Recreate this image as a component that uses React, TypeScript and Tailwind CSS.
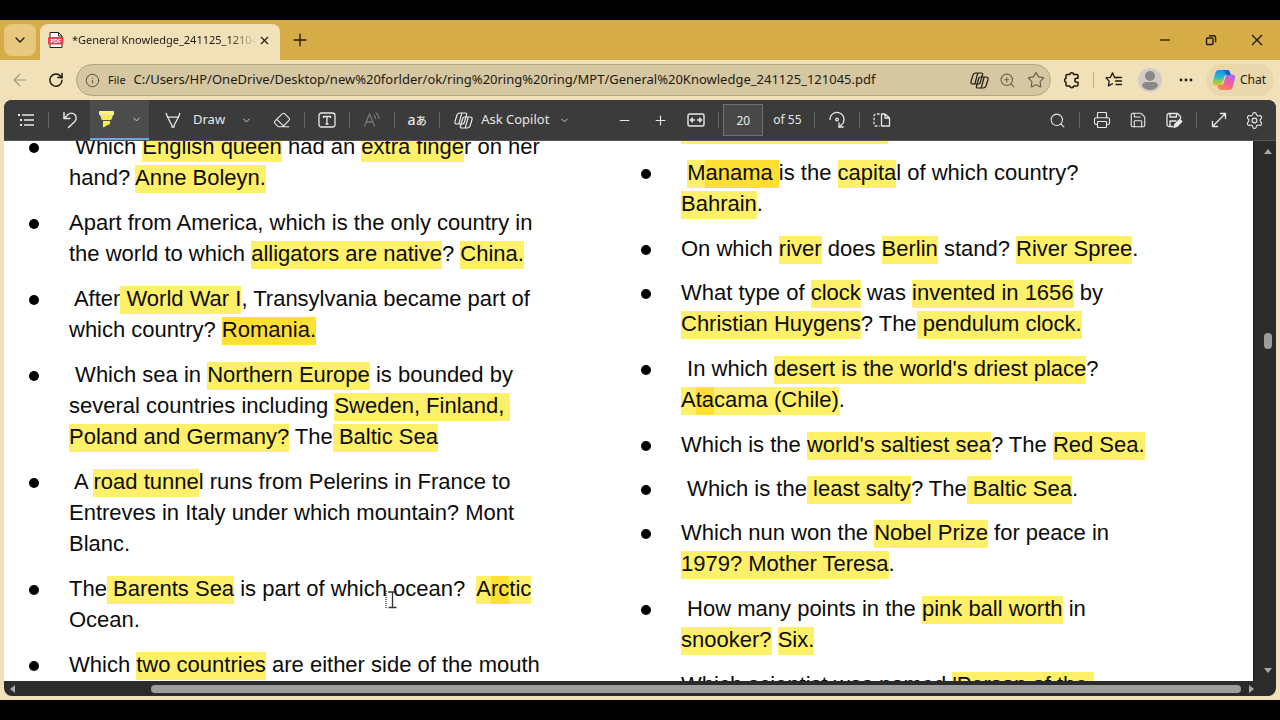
// PDF viewer inside a desktop browser window
import { useState } from 'react';
import type { ReactNode } from 'react';
import { ChevronDown, Eraser, Plus, Minus, Printer, Save, Search, Settings, Star, X, ZoomIn, ArrowLeft, Info } from 'lucide-react';

// one entry per bullet, one string per line; [..] = highlighted, {..} = highlighted twice
const LEFT: string[][] = [
  [' Which [English queen] had an [extra finge]r on her', 'hand? [Anne Boleyn.]'],
  ['Apart from America, which is the only country in', 'the world to which [alligators are native]? [China.]'],
  [' After[ World War I], Transylvania became part of', 'which country? {Romania.}'],
  [' Which sea in [Northern Europe] is bounded by', 'several countries including [Sweden, Finland, ]', '[Poland and Germany?] The[ Baltic Sea]'],
  [' A [road tunne]l runs from Pelerins in France to', 'Entreves in Italy under which mountain? Mont', 'Blanc.'],
  ['The[ Barents Sea] is part of which ocean?  [A]{rc}[tic]', 'Ocean.'],
  ['Which [two countries] are either side of the mouth'],
];

const RIGHT: string[][] = [
  ['[Mary Queen of Scots]'],
  [' [M]{anama }is the [capita]l of which country?', '[Bahrain].'],
  ['On which [river] does [Berlin] stand? [River Spree].'],
  ['What type of [clock] was [invented in 1656] by', '[Christian Huygens]? The[ pendulum clock.]'],
  [" In which [desert is the world's driest place]?", '[A]{ta}[cama (Chile)].'],
  ["Which is the [world's saltiest sea]? The [Red Sea.]"],
  [' Which is the[ least salty]? The[ Baltic Sea].'],
  ['Which nun won the [Nobel Prize] for peace in', '[1979? Mother Teresa].'],
  [' How many points in the [pink ball worth] in', '[snooker?] [Six.]'],
  ["Which scientist was named ['Person of the ]"],
];

export default function App() {
  return (
    <div className="flex h-screen flex-col overflow-hidden bg-black py-5 font-['Noto_Sans','Noto_Sans_CJK_JP',sans-serif] text-[#1f1a10]">
      <TabStrip />
      <AddressBar />
      <main className="flex min-h-0 flex-1 flex-col bg-[#f1e1b9] px-1 pb-1">
        <div className="flex min-h-0 flex-1 flex-col overflow-hidden rounded-lg bg-[#2b2b2b]">
          <PdfToolbar />
          <div className="flex min-h-0 flex-1">
            <Page />
            <VerticalScroll />
          </div>
          <HorizontalScroll />
        </div>
      </main>
    </div>
  );
}

/* ---------- browser chrome ---------- */

function TabStrip() {
  return (
    <header className="flex h-10 shrink-0 items-center bg-[#d6ac46]">
      <button className="ml-1 flex size-8 items-center justify-center rounded-lg bg-[#e6c97e]" aria-label="Tab actions">
        <ChevronDown size={16} strokeWidth={2} />
      </button>
      <div className="ml-1 flex h-9 w-60 items-center self-end rounded-t-lg bg-[#f1e1b9] px-2 pb-1">
        <PdfIcon />
        <span className="ml-2 min-w-0 flex-1 overflow-hidden text-[11px] whitespace-nowrap [mask-image:linear-gradient(to_right,black_85%,transparent)]">
          *General Knowledge_241125_121045.pdf
        </span>
        <button className="flex size-4 items-center justify-center" aria-label="Close tab">
          <X size={13} strokeWidth={2} />
        </button>
      </div>
      <button className="flex h-10 w-10 items-center justify-center" aria-label="New tab">
        <Plus size={20} strokeWidth={1.6} />
      </button>
      <div className="ml-auto flex">
        <button className="flex h-10 w-[46px] items-center justify-center" aria-label="Minimize">
          <svg width="12" height="12" viewBox="0 0 12 12" stroke="currentColor" strokeWidth="1.3"><path d="M1 6h10" /></svg>
        </button>
        <button className="flex h-10 w-[46px] items-center justify-center" aria-label="Restore">
          <svg width="12" height="12" viewBox="0 0 12 12" fill="none" stroke="currentColor" strokeWidth="1.4">
            <rect x="1.5" y="4" width="6.5" height="6.5" rx="1.2" />
            <path d="M4 1.7h4.6a2 2 0 0 1 2 2v4.6" />
          </svg>
        </button>
        <button className="flex h-10 w-[46px] items-center justify-center" aria-label="Close">
          <svg width="12" height="12" viewBox="0 0 12 12" stroke="currentColor" strokeWidth="1.4"><path d="M1 1l10 10M11 1L1 11" /></svg>
        </button>
      </div>
    </header>
  );
}

function AddressBar() {
  const [url, setUrl] = useState('C:/Users/HP/OneDrive/Desktop/new%20forlder/ok/ring%20ring%20ring/MPT/General%20Knowledge_241125_121045.pdf');
  return (
    <nav className="flex h-10 shrink-0 items-center bg-[#f1e1b9] pr-1.5">
      <button className="flex h-8 w-10 items-center justify-center text-[#a3967a]" aria-label="Back">
        <ArrowLeft size={20} strokeWidth={1.4} />
      </button>
      <button className="mr-1 flex size-8 items-center justify-center" aria-label="Refresh">
        <svg width="16" height="16" viewBox="0 0 16 16" fill="none" stroke="currentColor" strokeWidth="1.5" strokeLinecap="round" strokeLinejoin="round">
          <path d="M14 8.3A6.1 6.1 0 1 1 12.6 4.2L14 5.6" />
          <path d="M14 1.5v4.1H9.9" />
        </svg>
      </button>
      <div className="flex h-8 min-w-0 flex-1 items-center rounded-full border border-[#b3a681] bg-[#d5c7a2] pl-2">
        <Info size={15} strokeWidth={1.6} className="shrink-0 text-[#5c5340]" />
        <label htmlFor="url" className="ml-2 text-[11px]">File</label>
        <input
          id="url"
          className="ml-2 min-w-0 flex-1 bg-transparent text-[13px] outline-none"
          value={url}
          onChange={(e) => setUrl(e.target.value)}
        />
        <button className="flex w-7 justify-center" aria-label="Copilot"><CopilotOutline /></button>
        <button className="flex w-7 justify-center text-[#6b6048]" aria-label="Zoom"><ZoomIn size={17} strokeWidth={1.6} /></button>
        <button className="flex w-7 justify-center text-[#6b6048]" aria-label="Favorite"><Star size={18} strokeWidth={1.6} /></button>
      </div>
      <button className="flex w-[42px] justify-center" aria-label="Extensions">
        <svg width="17" height="18" viewBox="0 0 17 18" fill="none" stroke="currentColor" strokeWidth="1.5" strokeLinejoin="round">
          <path d="M4 3.5h2.7a2.1 2.1 0 0 1 4.1 0H14a1 1 0 0 1 1 1v2.7h-1.2a2 2 0 0 0 0 4H15V14a1 1 0 0 1-1 1h-3.2a2.1 2.1 0 0 1-4.1 0H4a1 1 0 0 1-1-1v-2.8a2.1 2.1 0 0 1 0-4V4.5a1 1 0 0 1 1-1z" />
        </svg>
      </button>
      <span className="h-4 w-px bg-[#b9ab86]" />
      <button className="flex w-10 justify-center" aria-label="Favorites">
        <svg width="18" height="18" viewBox="0 0 18 18" fill="none" stroke="currentColor" strokeWidth="1.3" strokeLinejoin="round" strokeLinecap="round">
          <path d="M9.5 6.5L7.5 1.8 5.5 6.3 1 6.9l3.2 3.2-.8 4.8 4.1-2.2M9.5 6.5H12" />
          <path d="M11 6.5h5.5M10.5 10h6M11 13.5h5.5" />
        </svg>
      </button>
      <button className="mx-1 flex size-6 items-center justify-center overflow-hidden rounded-full bg-[#d3cbc5]" aria-label="Profile">
        <svg width="20" height="20" viewBox="0 0 20 20" fill="#8b8887">
          <circle cx="10" cy="6" r="5" />
          <path d="M2 16c0-2.5 2-4 4-4h8c2 0 4 1.5 4 4-1.5 2.500-5 4-8 4s-6.500-1.500-8-4z" />
        </svg>
      </button>
      <button className="flex w-10 justify-center" aria-label="More">
        <svg width="14" height="4" viewBox="0 0 14 4" fill="currentColor"><circle cx="2" cy="2" r="1.4" /><circle cx="7" cy="2" r="1.4" /><circle cx="12" cy="2" r="1.4" /></svg>
      </button>
      <button className="flex h-8 items-center gap-1 rounded-full bg-[#e9d8ad] pr-2 pl-1.5 text-xs">
        <CopilotColor />
        Chat
      </button>
    </nav>
  );
}

/* ---------- viewer toolbar ---------- */

function PdfToolbar() {
  const [page, setPage] = useState('20');
  return (
    <div className="flex h-[41px] shrink-0 items-center border-b border-[#555555] bg-[#3b3b3b] text-[#e8e8e8]">
      <Tool label="Contents">
        <svg width="18" height="14" viewBox="0 0 18 14" fill="none" stroke="currentColor" strokeWidth="1.3">
          <path d="M5 2h12M7 7h10M7 12h10" /><path d="M1 2h2M3 7h2M3 12h2" strokeWidth="1.8" />
        </svg>
      </Tool>
      <Sep />
      <button className="flex h-10 w-[41px] items-center justify-center" aria-label="Undo">
        <svg width="16" height="18" viewBox="0 0 16 18" fill="none" stroke="currentColor" strokeWidth="1.4" strokeLinecap="round" strokeLinejoin="round">
          <path d="M2 1.5v6h6" /><path d="M2.3 7.2L6 3.6a4.800 4.800 0 0 1 6.800 6.800L6.500 16.500" />
        </svg>
      </button>
      <button className="flex h-10 w-[59px] items-center justify-center gap-4 border-b-2 border-[#6aa5dc] bg-[#4c4c4c]" aria-label="Highlight">
        <svg width="17" height="18" viewBox="0 0 17 18">
          <path d="M1.5 1.5h14v3h-14z" fill="#fff36b" stroke="#f5ecc0" />
          <path d="M2.500 5h12l-1.500 4.500h-9z" fill="#f7e84e" stroke="#e8dfb0" />
          <path d="M5 11h7v3l-7 3.500z" fill="#fff04a" />
        </svg>
        <ChevronDown size={11} strokeWidth={1.8} />
      </button>
      <button className="flex h-10 items-center pr-2 pl-4 text-[13px]">
        <svg width="16" height="16" viewBox="0 0 16 16" fill="none" stroke="currentColor" strokeWidth="1.3" strokeLinejoin="round">
          <path d="M1 1l1.500 4L7 13.500V15h2v-1.500L13.500 5 15 1M2.500 5.200h11" />
        </svg>
        <span className="ml-3">Draw</span>
        <ChevronDown size={11} strokeWidth={1.8} className="ml-4" />
      </button>
      <Tool label="Erase"><Eraser size={18} strokeWidth={1.5} /></Tool>
      <Sep />
      <Tool label="Add text">
        <svg width="18" height="16" viewBox="0 0 18 16" fill="none" stroke="currentColor" strokeWidth="1.3">
          <rect x="1" y="1" width="16" height="14" rx="2.5" /><path d="M5.500 6V4.500h7V6M9 4.500v7.500M7.500 12h3" />
        </svg>
      </Tool>
      <Sep />
      <Tool label="Read aloud" dim>
        <svg width="18" height="18" viewBox="0 0 18 18" fill="none" stroke="currentColor" strokeWidth="1.3" strokeLinecap="round">
          <path d="M1.500 15L6.500 3l5 12M3.300 11h6.400M11 4.500c1 .8 1.400 1.800 1.400 3M13 2c2 1.500 3 3.300 3 5.500" />
        </svg>
      </Tool>
      <Sep />
      <Tool label="Translate">
        <span className="text-sm leading-none font-medium">a<span className="text-[11px]">あ</span></span>
      </Tool>
      <Sep />
      <button className="flex h-10 items-center pl-3.5 text-[13px]">
        <CopilotOutline />
        <span className="ml-2 whitespace-nowrap">Ask Copilot</span>
        <ChevronDown size={11} strokeWidth={1.8} className="ml-2.5" />
      </button>
      <div className="ml-9 flex items-center">
        <Tool label="Zoom out" narrow><Minus size={15} strokeWidth={1.8} /></Tool>
        <Tool label="Zoom in" narrow><Plus size={15} strokeWidth={1.8} /></Tool>
        <Tool label="Fit to width" narrow>
          <svg width="18" height="14" viewBox="0 0 18 14" fill="none" stroke="currentColor" strokeWidth="1.4">
            <rect x="1" y="1" width="16" height="12" rx="1.5" /><path d="M3.500 7H8M10 7h4.500M5.800 4.800L3.500 7l2.300 2.200M12.200 4.800L14.500 7l-2.300 2.200" />
          </svg>
        </Tool>
        <span className="mx-1"><Sep /></span>
        <input
          aria-label="Page number"
          className="h-8 w-10 border border-[#707070] bg-[#484848] text-center text-xs"
          value={page}
          onChange={(e) => setPage(e.target.value)}
        />
        <span className="mr-3 ml-2.5 text-xs whitespace-nowrap">of 55</span>
        <Sep />
        <Tool label="Rotate">
          <svg width="18" height="18" viewBox="0 0 18 18" fill="none" stroke="currentColor" strokeWidth="1.3" strokeLinecap="round" strokeLinejoin="round">
            <path d="M2 8.500a7 7 0 1 1 11.200 5.600L11 16" /><path d="M11 12v4h4.200" /><circle cx="9" cy="8.5" r="1.3" />
          </svg>
        </Tool>
        <Sep />
        <Tool label="Page view">
          <svg width="18" height="14" viewBox="0 0 18 14" fill="none" stroke="currentColor" strokeWidth="1.3" strokeLinejoin="round">
            <path d="M8.500 1H12l4.500 4v8h-8zM12 1v4h4.500" /><path d="M6.500 1H3a2 2 0 0 0-2 2v8a2 2 0 0 0 2 2h3.500" strokeDasharray="2.5 1.5" />
          </svg>
        </Tool>
      </div>
      <div className="ml-auto flex items-center pr-3">
        <Tool label="Find"><Search size={17} strokeWidth={1.5} /></Tool>
        <Sep />
        <span className="w-1" />
        <Tool label="Print" narrow><Printer size={18} strokeWidth={1.5} /></Tool>
        <Tool label="Save" narrow><Save size={18} strokeWidth={1.5} /></Tool>
        <Tool label="Save as" narrow>
          <svg width="18" height="18" viewBox="0 0 18 18" fill="none" stroke="currentColor" strokeWidth="1.3" strokeLinejoin="round">
            <path d="M8 15.500H4a2 2 0 0 1-2-2v-9a2 2 0 0 1 2-2h8.500L15.500 5.500V8M5 2.500V6h6.500V2.500M5 15.500V10h6.500" />
            <path d="M9 16.500l.8-3 5-5 2 2-5 5z" fill="currentColor" />
          </svg>
        </Tool>
        <span className="w-1" />
        <Sep />
        <Tool label="Full screen">
          <svg width="16" height="16" viewBox="0 0 16 16" fill="none" stroke="currentColor" strokeWidth="1.3" strokeLinecap="round" strokeLinejoin="round">
            <path d="M1.500 14.500l13-13M9.500 1.500h5v5M1.500 9.500v5h5" />
          </svg>
        </Tool>
        <button className="ml-1" aria-label="Settings"><Settings size={19} strokeWidth={1.4} /></button>
      </div>
    </div>
  );
}

function Tool({ label, children, narrow = false, dim = false }: { label: string; children: ReactNode; narrow?: boolean; dim?: boolean }) {
  return (
    <button
      aria-label={label}
      className={`flex h-10 shrink-0 items-center justify-center ${narrow ? 'w-9' : 'w-11'} ${dim ? 'text-[#787878]' : ''}`}
    >
      {children}
    </button>
  );
}

function Sep() {
  return <span className="block h-4 w-px shrink-0 bg-[#666666]" />;
}

/* ---------- document ---------- */

function Page() {
  return (
    <article className="relative grid min-w-0 flex-1 grid-cols-[49%_1fr] overflow-hidden bg-white font-['Arial_Narrow','Liberation_Sans',sans-serif] text-[22px] leading-[31px] text-[#0c0c0c]">
      <Column items={LEFT} className="-mt-2.5" />
      <Column items={RIGHT} className="-mt-7" />
      {/* text cursor */}
      <svg className="absolute top-[450px] left-[381px]" width="14" height="18" viewBox="0 0 14 18" fill="none" stroke="#333333" strokeWidth="1.3">
        <path d="M3 1h9M7.500 1v15.500M3.500 16.500h8" /><path d="M1 0v17" strokeDasharray="1 1" />
      </svg>
    </article>
  );
}

function Column({ items, className }: { items: string[][]; className: string }) {
  return (
    <ul className={`flex min-w-0 flex-col ${className}`}>
      {items.map((lines, i) => (
        <li key={i} className={`flex shrink-0 gap-[30px] pl-[25px] ${lines.length > 1 ? 'mb-3.5' : 'mb-[13px]'}`}>
          <span className="mt-3 size-2.5 shrink-0 rounded-full bg-black" />
          <p className="whitespace-pre">
            {lines.map((line, j) => <span key={j} className="block">{marked(line)}</span>)}
          </p>
        </li>
      ))}
    </ul>
  );
}

// split a line into plain and highlighted runs
function marked(line: string) {
  return line.split(/(\[[^\]]*\]|\{[^}]*\})/).filter(Boolean).map((run, i) => {
    if (run[0] === '[') return <mark key={i} className="bg-[#fff06a] pb-[3px] text-inherit">{run.slice(1, -1)}</mark>;
    if (run[0] === '{') return <mark key={i} className="bg-[#ffdf32] pb-[3px] text-inherit">{run.slice(1, -1)}</mark>;
    return <span key={i}>{run}</span>;
  });
}

function VerticalScroll() {
  return (
    <div className="flex w-[23px] shrink-0 flex-col items-end border-l border-[#1c1c1c]">
      <div className="flex h-full w-4 flex-col items-center py-2">
        <svg width="8" height="5" viewBox="0 0 8 5" fill="#a8a8a8"><path d="M4 0l4 5H0z" /></svg>
        <span className="mt-[179px] h-4 w-2 rounded-full bg-[#9d9d9d]" />
        <svg className="mt-auto" width="8" height="5" viewBox="0 0 8 5" fill="#a8a8a8"><path d="M0 0h8L4 5z" /></svg>
      </div>
    </div>
  );
}

function HorizontalScroll() {
  return (
    <div className="flex h-[15px] shrink-0 items-center pr-[22px] pl-1.5">
      <svg width="5" height="8" viewBox="0 0 5 8" fill="#a8a8a8"><path d="M5 0v8L0 4z" /></svg>
      <div className="mx-2 flex flex-1 justify-end">
        <span className="h-2 w-[89.5%] rounded-full bg-[#9d9d9d]" />
      </div>
      <svg width="5" height="8" viewBox="0 0 5 8" fill="#a8a8a8"><path d="M0 0v8l5-4z" /></svg>
    </div>
  );
}

/* ---------- icons ---------- */

function PdfIcon() {
  return (
    <svg className="shrink-0" width="16" height="16" viewBox="0 0 16 16">
      <path d="M2 .5h8.500L14 4v11.500H2z" fill="#ffffff" stroke="#222222" />
      <path d="M10.500 .5V4H14" fill="none" stroke="#222222" />
      <rect x="0" y="5" width="15.5" height="7.5" rx="1" fill="#e2474b" />
      <text x="7.75" y="11" textAnchor="middle" fontSize="5.5" fontWeight="700" fill="#ffffff">PDF</text>
    </svg>
  );
}

function CopilotOutline() {
  return (
    <svg width="19" height="17" viewBox="0 0 19 17" fill="none" stroke="currentColor" strokeWidth="1.2" strokeLinejoin="round">
      <path d="M5.800 1h5.500c1 0 1.500.6 1.300 1.500l-2.300 8c-.3 1-1 1.500-1.800 1.500H3C1.300 12 .6 11 1 9.500l2-6.500C3.500 1.600 4.500 1 5.800 1z" />
      <path d="M13.200 16H7.700c-1 0-1.500-.6-1.300-1.500l2.300-8C9 5.500 9.700 5 10.500 5H16c1.700 0 2.400 1 2 2.500L16 14c-.5 1.400-1.500 2-2.800 2z" />
      <path d="M7.800 1L4.800 12M14.200 5l-3 11" />
    </svg>
  );
}

function CopilotColor() {
  return (
    <svg width="24" height="22" viewBox="0 0 24 22">
      <defs>
        <linearGradient id="cpA" x1="0" y1="0" x2="0" y2="1">
          <stop offset="0" stopColor="#1a8be8" /><stop offset=".45" stopColor="#22b9d6" /><stop offset=".75" stopColor="#8fd04a" /><stop offset="1" stopColor="#f2c21a" />
        </linearGradient>
        <linearGradient id="cpB" x1="0.8" y1="0" x2="0.2" y2="1">
          <stop offset="0" stopColor="#a86bf0" /><stop offset=".5" stopColor="#f0609a" /><stop offset="1" stopColor="#fb8a4a" />
        </linearGradient>
      </defs>
      <path d="M7 1h8c1.600 0 2.500.8 3 2.500L18.800 6H15c-1.500 0-2.300.8-2.800 2.300L10.500 14c-.5 1.700-1.400 2.500-3 2.500H4C1.500 16.500.3 14.800 1 12.300L3.200 4.500C3.900 2 5 1 7 1z" fill="url(#cpA)" />
      <path d="M17 21H9c-1.600 0-2.500-.8-3-2.500L5.200 16H9c1.500 0 2.300-.8 2.800-2.300L13.500 8c.5-1.700 1.400-2.500 3-2.500H20c2.500 0 3.700 1.700 3 4.200l-2.200 7.800C20.100 20 19 21 17 21z" fill="url(#cpB)" />
      <path d="M12 1h3c1.600 0 2.500.8 3 2.500L18.800 6h-4.300z" fill="#1460cf" />
    </svg>
  );
}
